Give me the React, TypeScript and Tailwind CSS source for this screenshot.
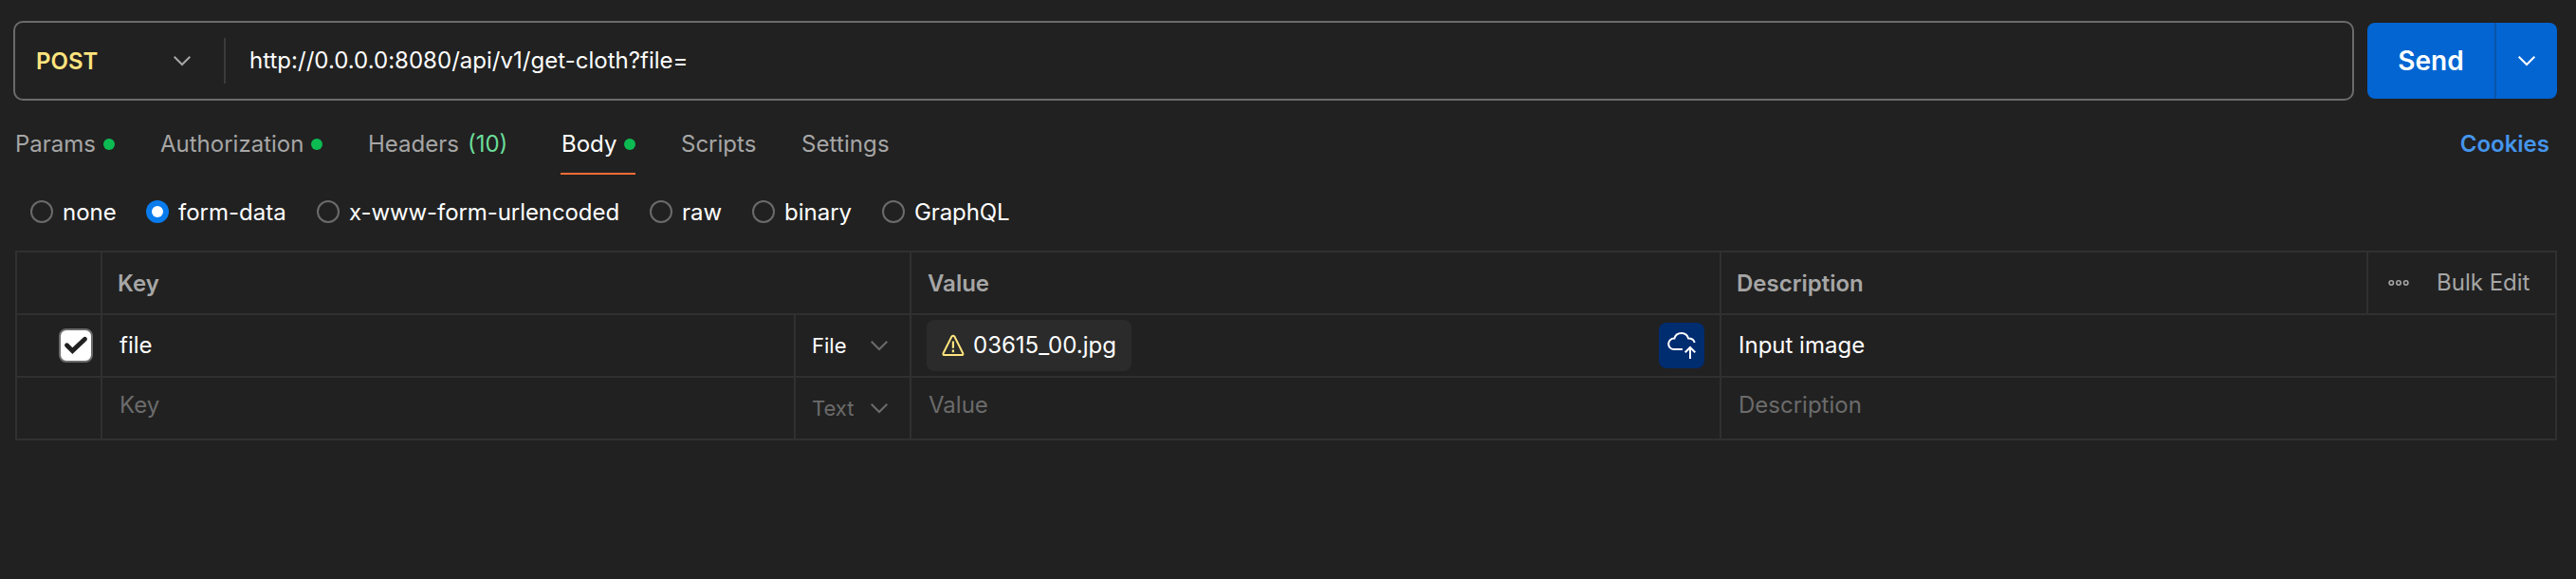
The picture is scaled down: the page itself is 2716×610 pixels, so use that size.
import React from "react";

function Chevron({ className }: { className: string }) {
  return (
    <svg width="20" height="12" viewBox="0 0 20 12" fill="none" stroke="currentColor" strokeWidth="2" className={className}>
      <path d="M1.7 1.7 10 10l8.300-8.300" />
    </svg>
  );
}

function Dot() {
  return <span className="ml-2 h-3 w-3 rounded-full bg-[#0cbb52]" />;
}

function Tab({ label, className, dot, active }: { label: string; className: string; dot?: boolean; active?: boolean }) {
  return (
    <div
      className={`flex h-16 shrink-0 items-center border-b-2 pt-0.5 ${
        active ? "border-[#ff6c37] text-white" : "border-transparent text-[#a6a6a6]"
      } ${className}`}
    >
      <span>{label}</span>
      {label === "Headers" && <span className="ml-[9px] text-[#6bdd9a]">(10)</span>}
      {dot && <Dot />}
    </div>
  );
}

function Radio({ label, className, checked }: { label: string; className: string; checked?: boolean }) {
  return (
    <label className={`flex shrink-0 items-center gap-[10px] ${className}`}>
      {checked ? (
        <span className="flex h-6 w-6 items-center justify-center rounded-full bg-[#097bed]">
          <span className="h-3 w-3 rounded-full bg-white" />
        </span>
      ) : (
        <span className="h-6 w-6 rounded-full border-2 border-[#6b6b6b]" />
      )}
      <span className="pt-0.5">{label}</span>
    </label>
  );
}

function TypeCell({ label }: { label: string }) {
  return (
    <div className="flex items-center justify-between border-r-2 border-[#303030] pr-[22px] pl-[17px] text-[22px]">
      <span>{label}</span>
      <Chevron className="text-[#6b6b6b]" />
    </div>
  );
}

const cell = "flex items-center border-r-2 border-[#303030]";
const row = "grid h-[66px] border-b-2 border-[#303030]";
const bodyCols = "grid-cols-[90px_731px_122px_854px_1fr]";

export default function App() {
  return (
    <main className="h-[610px] w-[2716px] overflow-hidden bg-[#212121] pt-[22px] font-['Inter',sans-serif] text-2xl leading-8 text-white">
      <div className="flex items-center pl-[14px]">
        <div className="flex h-[84px] w-[2468px] items-center rounded-[10px] border-2 border-[#6b6b6b]">
          <div className="flex h-12 w-[222px] items-center justify-between border-r-2 border-[#3b3b3b] pr-[34px] pl-[22px]">
            <span className="pt-px font-semibold text-[#ffe47e]">POST</span>
            <Chevron className="text-[#a6a6a6]" />
          </div>
          <span className="pl-[25px] tracking-[0.02px]">http://0.0.0.0:8080/api/v1/get-cloth?file=</span>
        </div>
        <div className="ml-[14px] flex h-20 w-[200px] overflow-hidden rounded-lg bg-[#0265d2]">
          <div className="flex w-[136px] items-center justify-center border-r-2 border-[#0b53a8] pb-px text-[28px] font-semibold">Send</div>
          <div className="flex flex-1 items-center justify-center">
            <Chevron className="text-white" />
          </div>
        </div>
      </div>

      <nav className="mt-[14px] flex pl-4">
        <Tab label="Params" className="w-[153px]" dot />
        <Tab label="Authorization" className="w-[219px]" dot />
        <Tab label="Headers" className="w-[203px]" />
        <Tab label="Body" className="w-[79px] justify-between pl-px" dot active />
        <Tab label="Scripts" className="ml-12 w-[127px]" />
        <Tab label="Settings" className="tracking-[0.1px]" />
        <div className="mr-7 ml-auto flex h-16 items-center pb-px font-semibold text-[#4595ec]">Cookies</div>
      </nav>

      <div className="mt-[19px] flex h-10 items-center pl-8">
        <Radio label="none" className="w-[122px]" />
        <Radio label="form-data" className="w-[180px]" checked />
        <Radio label="x-www-form-urlencoded" className="w-[351px] tracking-[-0.08px]" />
        <Radio label="raw" className="w-[108px]" />
        <Radio label="binary" className="w-[137px]" />
        <Radio label="GraphQL" className="tracking-[-0.1px]" />
      </div>

      <section className="mt-[21px] ml-4 w-[2680px] border-t-2 border-r-2 border-l-2 border-[#303030]">
        <div className={`${row} grid-cols-[90px_853px_854px_682px_1fr] font-semibold text-[#a6a6a6]`}>
          <div className={cell} />
          <div className={`${cell} pt-0.5 pl-4`}>Key</div>
          <div className={`${cell} pt-0.5 pl-[17px]`}>Value</div>
          <div className={`${cell} pt-0.5 pl-4`}>Description</div>
          <div className="flex items-center pl-[21px] font-normal">
            <svg width="22" height="8" viewBox="0 0 22 8" fill="none" stroke="currentColor" strokeWidth="1.6">
              <circle cx="3.300" cy="4" r="2.200" />
              <circle cx="11" cy="4" r="2.200" />
              <circle cx="18.700" cy="4" r="2.200" />
            </svg>
            <span className="ml-[29px]">Bulk Edit</span>
          </div>
        </div>

        <div className={`${row} ${bodyCols}`}>
          <div className={`${cell} justify-end pr-2`}>
            <span className="flex h-9 w-9 items-center justify-center rounded-lg border-2 border-[#6b6b6b] bg-white">
              <svg width="28" height="22" viewBox="0 0 28 22" fill="none" stroke="#212121" strokeWidth="4.800" strokeLinecap="round" className="shrink-0">
                <path d="M4.500 10.800 10.400 16.600 23.500 4.200" />
              </svg>
            </span>
          </div>
          <div className={`${cell} pl-[18px]`}>file</div>
          <TypeCell label="File" />
          <div className={`${cell} justify-between pr-4 pl-4`}>
            <div className="flex h-[54px] w-[216px] items-center rounded-lg bg-[#2b2b2b] pl-4">
              <svg width="24" height="24" viewBox="0 0 24 24" fill="none" stroke="#ffe47e" strokeWidth="2" strokeLinejoin="round" className="shrink-0">
                <path d="M10.300 2.700Q11.900 1 13.500 2.700L22.300 20.200Q22.700 22 21 22H2.800Q1.100 22 1.500 20.200Z" />
                <path d="M11.900 7.500v7.300M11.900 16.500v2.800" strokeWidth="2.200" />
              </svg>
              <span className="ml-[9px]">03615_00.jpg</span>
            </div>
            <span className="h-12 w-12 rounded-lg bg-[#002c70]">
              <svg width="48" height="48" viewBox="0 0 48 48" fill="none" stroke="white" strokeWidth="2">
                <path d="M25 28H15.500A5.700 5.700 0 0 1 16.300 16.600A7.800 7.800 0 0 1 31.200 16.600C34.800 16.600 37 18.200 37.700 21M33 38V26M27.700 31.300 33 26l5.300 5.300" />
              </svg>
            </span>
          </div>
          <div className="flex items-center pl-[18px]">Input image</div>
        </div>

        <div className={`${row} ${bodyCols} text-[#6b6b6b]`}>
          <div className={cell} />
          <div className={`${cell} pb-1.5 pl-[18px]`}>Key</div>
          <TypeCell label="Text" />
          <div className={`${cell} pb-1.5 pl-[18px]`}>Value</div>
          <div className="flex items-center pb-1.5 pl-[18px]">Description</div>
        </div>
      </section>
    </main>
  );
}
